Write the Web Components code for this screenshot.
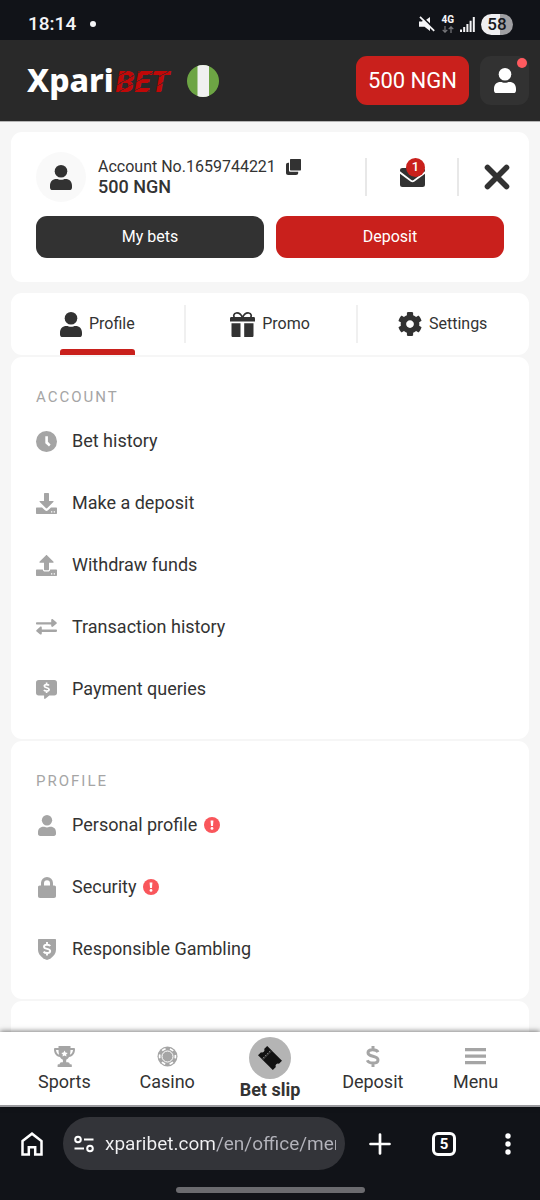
<!DOCTYPE html>
<html lang="en">
<head>
<meta charset="utf-8">
<meta name="viewport" content="width=device-width, initial-scale=1">
<title>Xparibet – Office</title>
<style>
  html, body { margin: 0; height: 100%; }
  body {
    font-family: Roboto, "Liberation Sans", sans-serif;
    font-size: 18px;
    line-height: 24px;
    color: #333;
    background: #f6f6f6;
    --red: #c9201c;
    --dark: #323232;
    --muted: #a5a5a5;
    --chrome: #111318;
    --line: #e8e8e8;
  }
</style>
</head>
<body>
<app-shell>
  <status-bar slot="top"></status-bar>
  <site-header slot="top" balance="500 NGN"></site-header>

  <account-card number="1659744221" balance="500 NGN" messages="1"></account-card>
  <section-tabs>
    <section-tab icon="user" selected>Profile</section-tab>
    <section-tab icon="gift">Promo</section-tab>
    <section-tab icon="gear">Settings</section-tab>
  </section-tabs>
  <menu-section heading="ACCOUNT">
    <menu-item icon="clock" href="#history">Bet history</menu-item>
    <menu-item icon="deposit" href="#deposit">Make a deposit</menu-item>
    <menu-item icon="withdraw" href="#withdraw">Withdraw funds</menu-item>
    <menu-item icon="transfer" href="#transactions">Transaction history</menu-item>
    <menu-item icon="query" href="#queries">Payment queries</menu-item>
  </menu-section>
  <menu-section heading="PROFILE">
    <menu-item icon="person" href="#personal" alert>Personal profile</menu-item>
    <menu-item icon="lock" href="#security" alert>Security</menu-item>
    <menu-item icon="shield" href="#responsible">Responsible Gambling</menu-item>
  </menu-section>
  <menu-section></menu-section>

  <bottom-nav slot="bottom">
    <nav-item icon="trophy" href="#sports">Sports</nav-item>
    <nav-item icon="chip" href="#casino">Casino</nav-item>
    <nav-item icon="ticket" href="#slip" featured>Bet slip</nav-item>
    <nav-item icon="dollar" href="#deposit">Deposit</nav-item>
    <nav-item icon="menu" href="#menu">Menu</nav-item>
  </bottom-nav>
  <browser-bar slot="bottom" url="xparibet.com/en/office/menu" tabs="5"></browser-bar>
</app-shell>

<script>
const BASE = `:host, *, *::before, *::after { box-sizing: border-box; }
  button, input { font: inherit; color: inherit; border: 0; margin: 0; padding: 0; background: none; }
  a { color: inherit; text-decoration: none; }`;

const GEAR = 'M487.4 315.7l-42.6-24.6c4.3-23.2 4.3-47 0-70.2l42.6-24.6c4.9-2.8 7.1-8.6 5.5-14-11.1-35.6-30-67.8-54.7-94.6-3.8-4.1-10-5.1-14.8-2.3L380.8 110c-17.9-15.4-38.5-27.3-60.8-35.1V25.8c0-5.6-3.9-10.5-9.4-11.7-36.7-8.2-74.3-7.8-109.2 0-5.5 1.2-9.4 6.1-9.4 11.7V75c-22.2 7.9-42.8 19.8-60.8 35.1L88.7 85.5c-4.9-2.8-11-1.9-14.8 2.3-24.7 26.7-43.6 58.9-54.7 94.6-1.7 5.4.6 11.2 5.5 14L67.3 221c-4.3 23.2-4.3 47 0 70.2l-42.6 24.6c-4.9 2.8-7.1 8.6-5.5 14 11.1 35.6 30 67.8 54.7 94.6 3.8 4.1 10 5.1 14.8 2.3l42.6-24.6c17.9 15.4 38.5 27.3 60.8 35.1v49.2c0 5.6 3.9 10.5 9.4 11.7 36.7 8.2 74.3 7.8 109.2 0 5.5-1.2 9.4-6.1 9.4-11.7v-49.2c22.2-7.9 42.8-19.8 60.8-35.1l42.6 24.6c4.9 2.8 11 1.9 14.8-2.3 24.7-26.7 43.6-58.9 54.7-94.6 1.5-5.5-.7-11.3-5.6-14.1zM256 336c-44.1 0-80-35.9-80-80s35.9-80 80-80 80 35.9 80 80-35.9 80-80 80z';
const USER = '<circle cx="11" cy="6.3" r="6.3"/><path d="M0 20.8C0 16.6 2.6 14 6.5 14c1.6 0 2.6.8 4.5.8s2.900-.8 4.500-.8c3.900 0 6.500 2.600 6.500 6.800v1.600c0 1.600-1 2.600-2.600 2.600H2.600C1 25 0 24 0 22.400z"/>';
const DISK = '<path fill-rule="evenodd" d="M1 14.500h5l3 2.800c1 .9 2 .9 3 0l3-2.800h5c.7 0 1 .3 1 1V20c0 .7-.3 1-1 1H1c-.7 0-1-.3-1-1v-4.500c0-.7.3-1 1-1zM15 18.200v1.400h1.300v-1.400zM17.700 18.200v1.400H19v-1.400z"/>';

/* name: [width, height, markup], in px at natural size */
const ICONS = {
  user: [22, 25, USER],
  person: [18, 21, `<g transform="scale(.818 .84)">${USER}</g>`],
  gear: [24, 24, `<path transform="translate(-.4 -.4) scale(.0485)" d="${GEAR}"/>`],
  gift: [25, 25, '<path d="M1.500 11.300h9V25H3c-1 0-1.500-.5-1.500-1.500zM14.200 11.300h9.300v12.200c0 1-.5 1.500-1.500 1.500h-7.800z"/><path d="M1.500 5h22c1 0 1.500.5 1.500 1.500V9.500H0v-3C0 5.500.5 5 1.500 5z"/><path d="M12.500 5.600C10.500 1 8.500.8 6.300 1 3.500 1.400 3.200 4.400 4.600 5.600M12.500 5.600C14.500 1 16.500.8 18.700 1c2.800.4 3.100 3.400 1.700 4.600" fill="none" stroke="currentColor" stroke-width="1.700"/>'],
  clock: [21, 21, '<path fill-rule="evenodd" d="M10.500 0a10.500 10.500 0 1 0 0 21 10.500 10.500 0 0 0 0-21zM9.300 5.200h2.600v5.600l2.700 2.600-1.600 2.200-3.700-3.400z"/>'],
  deposit: [21, 21, `<path d="M8 1c0-.7.3-1 1-1h3c.7 0 1 .3 1 1v7h3.800c.8 0 1 .6.5 1.100l-6 5.900c-.5.500-1 .500-1.500 0l-6-5.900c-.5-.5-.3-1.100.500-1.100H8z"/>${DISK}`],
  withdraw: [21, 21, `<path d="M9.800.4c.5-.5 1-.5 1.400 0l6.100 6.200c.5.500.3 1.100-.500 1.100H13v6.600c0 .700-.3 1-1 1H9c-.7 0-1-.3-1-1V7.700H4.200c-.8 0-1-.6-.5-1.100z"/><path fill-rule="evenodd" d="M1 14.500h5.800c.2 1.500 1 2.100 2.200 2.100h3c1.200 0 2-.6 2.200-2.100H20c.7 0 1 .3 1 1V20c0 .7-.3 1-1 1H1c-.7 0-1-.3-1-1v-4.500c0-.7.3-1 1-1zM15 18.200v1.400h1.300v-1.400zM17.700 18.200v1.400H19v-1.400z"/>`],
  transfer: [21, 16, '<path d="M.8 3.200h14.400V1.400c0-1.200 1-1.700 1.900-.9l3.300 2.700c.6.500.6 1.100 0 1.600l-3.300 2.700c-.9.800-1.900.3-1.900-.9V5.500H.8c-.6 0-.8-.3-.8-.8V4c0-.5.2-.8.8-.8zM20.200 10.600H5.800V8.800c0-1.200-1-1.700-1.900-.9L.6 10.900c-.6.500-.6 1.100 0 1.600l3.300 2.700c.9.800 1.900.3 1.900-.9V12.900h14.400c.6 0 .8-.3.8-.8v-.7c0-.5-.2-.8-.8-.8z"/>'],
  query: [21, 19, '<path d="M2.700 0h15.600C20 0 21 1 21 2.700v10.100c0 1.700-1 2.700-2.700 2.700h-5L9.600 18.600c-.8.700-1.500.4-1.500-.6v-2.500H2.700C1 15.500 0 14.500 0 12.800V2.700C0 1 1 0 2.700 0z"/><path d="M13 5.600C12.300 4.600 8.300 4 8.300 6.100c0 2.200 4.800 1.200 4.800 3.500 0 2.200-4.300 1.800-5.200.5M10.600 2.600v2.200M10.600 10.800v2.200" fill="none" stroke="#fff" stroke-width="1.700"/>'],
  lock: [18, 21, '<path fill-rule="evenodd" d="M3 8.500V6a6 6 0 0 1 12 0v2.500h1.200c1.200 0 1.800.7 1.800 1.800v8.700c0 1.300-.7 2-2 2H2c-1.300 0-2-.7-2-2v-8.700c0-1.100.6-1.800 1.800-1.800zM6 8.500h6V6.200a3 3 0 0 0-6 0z"/>'],
  shield: [18, 21, '<path d="M1 0h16c.6 0 1 .4 1 1v9.500c0 5-4 8.500-8.200 10.300-.5.200-1.100.2-1.600 0C4 19 0 15.500 0 10.500V1c0-.6.400-1 1-1z"/><path d="M12.200 7C11.200 5.400 6 5.200 6 7.700c0 2.900 6.200 1.500 6.200 4.400 0 2.700-5.400 2.300-6.600.5M9 3v3M9 13.500v3" fill="none" stroke="#fff" stroke-width="1.900"/>'],
  trophy: [21, 21, '<path fill-rule="evenodd" d="M4.500 0h12v2h3.300c.8 0 1.200.4 1.200 1.200 0 4.200-2.300 7.200-6 7.800-.8 1.400-1.700 2.300-2.800 2.800v2.500h1.600c1.200 0 1.900.7 1.900 1.900h1.300c.5 0 .8.300.8.800V21H3.600v-2c0-.5.300-.8.800-.8h1.300c0-1.200.7-1.900 1.900-1.900h1.300v-2.500C7.700 13.300 6.800 12.400 6 11 2.300 10.400 0 7.400 0 3.200 0 2.400.4 2 1.200 2h3.300zM4.500 4H2c.2 2.200 1.300 4 3.100 4.700C4.700 7.300 4.500 5.700 4.500 4zM16.500 4c0 1.700-.2 3.300-.6 4.700C17.700 8 18.800 6.200 19 4zM10.500 4.600l-1 2-2.200.3 1.600 1.500-.4 2.200 2-1 2 1-.4-2.200 1.600-1.500-2.200-.3z"/>'],
  chip: [21, 21, '<circle cx="10.500" cy="10.500" r="10"/><circle cx="10.500" cy="10.500" r="7.900" fill="none" stroke="#fff" stroke-width="1.700" stroke-dasharray="3.800 4.473" stroke-dashoffset="1.900"/><circle cx="10.500" cy="10.500" r="5.500" fill="none" stroke="#fff" stroke-width="1"/>'],
  ticket: [24, 24, '<g transform="rotate(45 12 12)"><path d="M1.500 5.500h5.500v13H1.500v-4.300a2.300 2.300 0 0 0 0-4.400zM8.200 5.500h14.300v4.300a2.300 2.300 0 0 0 0 4.400v4.300H8.200z"/><path d="M7.600 5.500v13" stroke="currentColor" stroke-width="1.600" stroke-dasharray="1.800 1"/></g>'],
  dollar: [14, 21, '<path d="M12 6.100C10.600 3 2 2.600 2 6.700c0 4.700 10 2.400 10 7.200 0 4.300-9.200 4-10.700.4M7 0v4M7 17v4" fill="none" stroke="currentColor" stroke-width="3"/>'],
  menu: [21, 17, '<path d="M0 0h21v3.200H0zM0 6.500h21v3.200H0zM0 13h21v3.200H0z"/>'],
  copy: [15, 16, '<path d="M5 0h9c.700 0 1 .3 1 1v9.500c0 .7-.3 1-1 1H5c-.7 0-1-.3-1-1V1c0-.7.300-1 1-1zM3 3.800v7.400c0 1 .6 1.600 1.600 1.600h7.600v1c0 1.400-.800 2.200-2.200 2.200H2.200C.8 16 0 15.200 0 13.800V5.900c0-1.400.8-2.100 2.200-2.100z"/>'],
  mail: [25, 19, '<path d="M2.500 0h20C24.200 0 25 .8 25 2.500v.7L13.600 12c-.8.600-1.400.6-2.200 0L0 3.200v-.7C0 .8.800 0 2.500 0zM0 5.700l10.500 7.900c1.400 1 2.600 1 4 0L25 5.700v10.800c0 1.700-.8 2.500-2.500 2.500h-20C.8 19 0 18.200 0 16.500z"/>'],
  close: [26, 26, '<path d="M3.500 3.500l19 19M22.500 3.500l-19 19" stroke="currentColor" stroke-width="5.600" stroke-linecap="round"/>'],
  alert: [16, 16, '<circle cx="8" cy="8" r="8" fill="#f9565b"/><path d="M6.600 3.500h2.800l-.4 5.600H7z" fill="#fff"/><circle cx="8" cy="11.400" r="1.400" fill="#fff"/>'],
  flag: [32, 32, '<clipPath id="c"><circle cx="16" cy="16" r="16"/></clipPath><g clip-path="url(#c)"><path fill="#6da544" d="M0 0h32v32H0z"/><path fill="#f0f0f0" d="M10.500 0h11.500v32H10.500z"/></g>'],
  mute: [16, 16, '<path d="M0 5.500h3l1.500-1.500 6.500 6.700V15l-5.500-4.200H0zM11 1v6.200L7.200 3.800z"/><path d="M1 .8l14.200 14" stroke="currentColor" stroke-width="1.800"/>'],
  data: [12, 7, '<path d="M3 0v6M.7 3.800L3 6.200l2.300-2.400M9 7V1M6.700 3.200L9 .8l2.300 2.400" fill="none" stroke="currentColor" stroke-width="1.200"/>'],
  signal: [15, 15, '<path d="M0 12.500h2V15H0zM3.200 10h2v5h-2zM6.400 7h2v8h-2zM9.600 3.800h2V15h-2zM12.800 0h2v15h-2z"/>'],
  home: [22, 24, '<path d="M1.500 9L11 1.700 20.500 9v13.500h-6.300v-7.300H7.800v7.300H1.500z" fill="none" stroke="currentColor" stroke-width="2.500"/>'],
  tune: [20, 18, '<g fill="none" stroke="currentColor" stroke-width="2"><circle cx="4" cy="4.500" r="2.800"/><path d="M10 4.500h9.500M.5 13.500H10"/><circle cx="16" cy="13.500" r="2.800"/></g>'],
  plus: [22, 22, '<path d="M11 1.500v19M1.500 11h19" stroke="currentColor" stroke-width="2.700" stroke-linecap="round"/>'],
  dots: [6, 22, '<circle cx="3" cy="3" r="2.700"/><circle cx="3" cy="11" r="2.700"/><circle cx="3" cy="19" r="2.700"/>']
};

/* Renders markup into an open shadow root, with the element's own styles */
class Base extends HTMLElement {
  connectedCallback() {
    if (this.shadowRoot) return;
    this.attachShadow({ mode: 'open' }).innerHTML = `<style>${BASE}${this.css()}</style>${this.html()}`;
  }
  attr(name) { return this.getAttribute(name) || ''; }
}
const define = (name, css, html) => customElements.define(name, class extends Base {
  css() { return css; }
  html() { return html(this); }
});

define('ui-icon', ':host { display: block; flex: none; } svg { display: block; fill: currentColor; }', el => {
  const [w, h, body] = ICONS[el.attr('name')];
  return `<svg width="${w}" height="${h}" viewBox="0 0 ${w} ${h}" aria-hidden="true">${body}</svg>`;
});

define('app-shell', `
  :host { display: flex; flex-direction: column; height: 100vh; }
  main { flex: 1; min-height: 0; overflow: hidden; padding: 10px 11px 0; border-top: 1px solid #b5b5b5;
    display: flex; flex-direction: column; gap: 2px; }
`, () => `<slot name="top"></slot><main><slot></slot></main><slot name="bottom"></slot>`);

define('status-bar', `
  :host { display: flex; align-items: center; gap: 6px; height: 40px; flex: none; padding: 8px 27px 0 28px;
    background: var(--chrome); color: #f4f4f6; }
  time { font-size: 19px; font-weight: 500; }
  .note { width: 6px; height: 6px; border-radius: 3px; background: currentColor; margin: 0 auto 0 8px; }
  .net { display: grid; justify-items: center; gap: 1px; font-size: 10px; line-height: 10px; font-weight: 800; }
  .net ui-icon { color: #77787c; }
  .battery { width: 32px; height: 21px; border-radius: 11px; text-align: center; line-height: 21px; font-size: 17px; font-weight: 500;
    color: #17181c; background: linear-gradient(90deg, #efeff1 58%, #a0a0a3 58%); }
`, () => `<time>18:14</time><span class="note"></span>
  <ui-icon name="mute"></ui-icon>
  <span class="net">4G<ui-icon name="data"></ui-icon></span>
  <ui-icon name="signal"></ui-icon><span class="battery">58</span>`);

define('site-header', `
  :host { display: flex; align-items: center; height: 81px; flex: none; padding: 0 11px 0 27px; background: #292929; color: #fff; }
  .logo { display: flex; align-items: baseline; gap: 2px; margin-right: 18px; line-height: 40px; }
  .name { font: 800 32px/40px "Noto Sans", "Open Sans", sans-serif; }
  .bet { font-size: 30px; font-weight: 900; font-style: italic; color: #c00808; position: relative; }
  .bet::after { content: ""; position: absolute; inset: 8px 0;
    background: repeating-linear-gradient(150deg, transparent 0 6px, #29292999 6px 7px); }
  .balance { margin-left: auto; height: 49px; padding: 0 12px; border-radius: 11px; background: var(--red); font-size: 22px; }
  .me { position: relative; display: grid; place-items: center; width: 49px; height: 49px; margin-left: 11px; border-radius: 11px; background: var(--dark); }
  .me::after { content: ""; position: absolute; top: 2px; right: 2px; width: 10px; height: 10px; border-radius: 5px; background: #ff5a5f; }
`, el => `<a class="logo" href="#home"><span class="name">Xpari</span><span class="bet">BET</span></a>
  <ui-icon name="flag"></ui-icon>
  <button class="balance">${el.attr('balance')}</button>
  <button class="me" aria-label="Account"><ui-icon name="user"></ui-icon></button>`);

define('account-card', `
  :host { display: block; flex: none; margin-bottom: 9px; padding: 20px 25px 24px; border-radius: 11px; background: #fff; }
  .row { display: flex; align-items: center; }
  .avatar { display: grid; place-items: center; width: 50px; height: 50px; border-radius: 25px; background: #f9f9f9; color: var(--dark); }
  .info { margin: 0 auto 0 12px; font-size: 16px; line-height: 20px; }
  .id { display: flex; align-items: center; gap: 10px; }
  strong { font-size: 18px; font-weight: 500; display: block; }
  button { display: block; color: var(--dark); }
  .mail { position: relative; display: grid; place-items: center; width: 94px; height: 38px;
    border: solid var(--line); border-width: 0 2px; }
  .badge { position: absolute; left: 39px; top: 0; width: 19px; height: 19px; border-radius: 10px; background: var(--red);
    color: #fff; font-size: 13px; line-height: 18px; font-weight: 500; }
  .close { margin: 0 -6px 0 25px; }
  .actions { display: grid; grid-template-columns: 1fr 1fr; gap: 12px; margin-top: 14px; }
  .actions button { height: 42px; border-radius: 11px; color: #fff; background: var(--dark); font-size: 16px; }
  .actions .pay { background: var(--red); }
`, el => `<div class="row">
    <span class="avatar"><ui-icon name="user"></ui-icon></span>
    <div class="info"><div class="id"><span>Account No.${el.attr('number')}</span>
      <button aria-label="Copy account number"><ui-icon name="copy"></ui-icon></button></div>
      <strong>${el.attr('balance')}</strong></div>
    <button class="mail" aria-label="Messages"><ui-icon name="mail"></ui-icon><span class="badge">${el.attr('messages')}</span></button>
    <button class="close" aria-label="Close"><ui-icon name="close"></ui-icon></button>
  </div>
  <div class="actions"><button>My bets</button><button class="pay">Deposit</button></div>`);

define('section-tabs', `
  :host { display: block; flex: none; border-radius: 11px; background: #fff; }
  div { display: grid; grid-template-columns: repeat(3, 1fr); height: 62px; }
`, () => `<div role="tablist"><slot></slot></div>`);

define('section-tab', `
  :host { display: grid; justify-items: center; position: relative; }
  :host(:not(:last-of-type))::after { content: ""; position: absolute; right: -2px; top: 12px; width: 2px; height: 38px; background: #f0f0f0; }
  button { display: flex; align-items: center; gap: 7px; height: 62px; font-size: 16px; position: relative; }
  ui-icon { color: var(--dark); }
  :host([selected]) button::after { content: ""; position: absolute; inset: auto 0 0; height: 6px; border-radius: 3px 3px 0 0; background: var(--red); }
`, el => `<button role="tab" aria-selected="${el.hasAttribute('selected')}"><ui-icon name="${el.attr('icon')}"></ui-icon><slot></slot></button>`);

define('menu-section', `
  :host { display: block; flex: none; min-height: 60px; padding: 27px 25px 19px; border-radius: 11px; background: #fff; }
  h2 { margin: 0; font-size: 15px; line-height: 26px; font-weight: 400; letter-spacing: 2px; color: var(--muted); }
  nav { display: block; }
`, el => el.attr('heading') ? `<h2>${el.attr('heading')}</h2><nav aria-label="${el.attr('heading')}"><slot></slot></nav>` : '');

define('menu-item', `
  :host { display: block; }
  a { display: flex; align-items: center; height: 62px; font-size: 18px; }
  .icon { display: grid; place-items: center; width: 21px; margin-right: 15px; color: var(--muted); }
  .alert { margin-left: 7px; }
`, el => `<a href="${el.attr('href')}"><span class="icon"><ui-icon name="${el.attr('icon')}"></ui-icon></span><slot></slot>${
  el.hasAttribute('alert') ? '<ui-icon class="alert" name="alert"></ui-icon>' : ''}</a>`);

define('bottom-nav', `
  :host { display: block; flex: none; position: relative; background: #fff; border-bottom: 2px solid #9a9a9e; box-shadow: 0 -1px 5px #00000080; }
  nav { display: grid; grid-template-columns: repeat(5, 1fr); height: 73px; padding: 0 13px; }
`, () => `<nav aria-label="Main"><slot></slot></nav>`);

define('nav-item', `
  :host { display: block; }
  a { display: flex; flex-direction: column; align-items: center; padding-top: 14px; line-height: 22px; }
  .icon { display: grid; place-items: center; height: 21px; margin-bottom: 4px; color: var(--muted); }
  :host([featured]) a { padding-top: 5px; font-weight: 700; }
  :host([featured]) .icon { width: 42px; height: 42px; margin: 0; border-radius: 21px; background: #b4b4b4; color: #121212; }
`, el => `<a href="${el.attr('href')}"><span class="icon"><ui-icon name="${el.attr('icon')}"></ui-icon></span><slot></slot></a>`);

define('browser-bar', `
  :host { display: block; flex: none; height: 93px; padding-top: 10px; background: var(--chrome); color: #fff; }
  .bar { display: flex; align-items: center; }
  button { display: grid; place-items: center; width: 64px; height: 52px; }
  .home { width: 63px; }
  label { flex: 1; min-width: 0; display: flex; align-items: center; gap: 11px; height: 53px; margin-right: 3px; padding: 0 9px 0 11px;
    border-radius: 27px; background: #333439; }
  input { flex: 1; min-width: 0; font-size: 19px; line-height: 26px; color: #fff;
    background: linear-gradient(90deg, #f2f2f4 111px, #b4b4bc 111px) text; -webkit-text-fill-color: transparent; }
  .tabs span { display: grid; place-items: center; width: 24px; height: 24px; border: 3px solid; border-radius: 6px; font-size: 15px; line-height: 18px; font-weight: 700; }
  .pill { width: 35%; height: 6px; margin: 17px auto 0; border-radius: 3px; background: #6b6b6f; }
`, el => `<div class="bar"><button class="home" aria-label="Home"><ui-icon name="home"></ui-icon></button>
  <label><ui-icon name="tune"></ui-icon><input type="text" aria-label="Address" value="${el.attr('url')}"></label>
  <button aria-label="New tab"><ui-icon name="plus"></ui-icon></button>
  <button class="tabs" aria-label="Open tabs"><span>${el.attr('tabs')}</span></button>
  <button aria-label="More"><ui-icon name="dots"></ui-icon></button></div><div class="pill"></div>`);
</script>
</body>
</html>
